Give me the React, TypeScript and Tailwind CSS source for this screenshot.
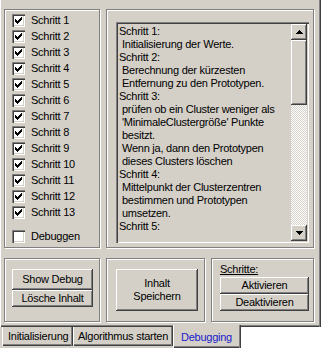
import React from 'react';

const steps = Array.from({ length: 13 }, (_, i) => `Schritt ${i + 1}`);

const log: { text: string; indent?: boolean }[] = [
  { text: 'Schritt 1:' },
  { text: 'Initialisierung der Werte.', indent: true },
  { text: 'Schritt 2:' },
  { text: 'Berechnung der kürzesten', indent: true },
  { text: 'Entfernung zu den Prototypen.', indent: true },
  { text: 'Schritt 3:' },
  { text: 'prüfen ob ein Cluster weniger als', indent: true },
  { text: "'MinimaleClustergröße' Punkte", indent: true },
  { text: 'besitzt.', indent: true },
  { text: 'Wenn ja, dann den Prototypen', indent: true },
  { text: 'dieses Clusters löschen', indent: true },
  { text: 'Schritt 4:' },
  { text: 'Mittelpunkt der Clusterzentren', indent: true },
  { text: 'bestimmen und Prototypen', indent: true },
  { text: 'umsetzen.', indent: true },
  { text: 'Schritt 5:' },
];

const raised =
  'shadow-[inset_-1px_-1px_0_#404040,inset_1px_1px_0_#fff,inset_-2px_-2px_0_#808080]';
const etched = 'border border-[#808080] shadow-[inset_1px_1px_0_#fff,1px_1px_0_#fff]';
const tabEdge =
  'shadow-[inset_1px_0_0_#fff,inset_-1px_0_0_#404040,inset_-2px_0_0_#808080,inset_0_-1px_0_#404040,inset_0_-2px_0_#808080]';

function CheckBox({ checked }: { checked: boolean }) {
  return (
    <div className="w-[13px] h-[13px] bg-white shrink-0 shadow-[inset_1px_1px_0_#808080,inset_2px_2px_0_#404040,inset_-1px_-1px_0_#fff,inset_-2px_-2px_0_#d4d0c8]">
      {checked && (
        <svg width="13" height="13" viewBox="0 0 13 13" shapeRendering="crispEdges">
          <rect x="3" y="5" width="1" height="3" fill="#000" />
          <rect x="4" y="6" width="1" height="3" fill="#000" />
          <rect x="5" y="7" width="1" height="3" fill="#000" />
          <rect x="6" y="6" width="1" height="3" fill="#000" />
          <rect x="7" y="5" width="1" height="3" fill="#000" />
          <rect x="8" y="4" width="1" height="3" fill="#000" />
          <rect x="9" y="3" width="1" height="3" fill="#000" />
        </svg>
      )}
    </div>
  );
}

function Arrow({ up }: { up?: boolean }) {
  return (
    <svg width="7" height="4" viewBox="0 0 7 4" shapeRendering="crispEdges">
      {up ? (
        <>
          <rect x="3" y="0" width="1" height="1" fill="#000" />
          <rect x="2" y="1" width="3" height="1" fill="#000" />
          <rect x="1" y="2" width="5" height="1" fill="#000" />
          <rect x="0" y="3" width="7" height="1" fill="#000" />
        </>
      ) : (
        <>
          <rect x="0" y="0" width="7" height="1" fill="#000" />
          <rect x="1" y="1" width="5" height="1" fill="#000" />
          <rect x="2" y="2" width="3" height="1" fill="#000" />
          <rect x="3" y="3" width="1" height="1" fill="#000" />
        </>
      )}
    </svg>
  );
}

export default function App() {
  return (
    <div className="w-[321px] h-[348px] bg-[#d4d0c8] text-black text-[11px] leading-[13px] tracking-[-0.25px] font-['Liberation_Sans',Arial,sans-serif] flex flex-col overflow-hidden">
      {/* tab page */}
      <div className="h-[327px] shrink-0 pl-[4px] pr-[7px] pt-[9px] shadow-[inset_1px_0_0_#fff,inset_-1px_0_0_#404040,inset_-2px_0_0_#808080,inset_0_-1px_0_#404040,inset_0_-2px_0_#808080] flex flex-col">
        <div className="flex gap-[6px] h-[239px]">
          <div className={`w-[96px] ${etched} pl-[7px] pt-[2px]`}>
            {steps.map(s => (
              <div key={s} className="h-[16px] flex items-center gap-[6px]">
                <CheckBox checked />
                <span>{s}</span>
              </div>
            ))}
            <div className="h-[16px] mt-[8px] flex items-center gap-[6px]">
              <CheckBox checked={false} />
              <span>Debuggen</span>
            </div>
          </div>

          <div className={`flex-1 ${etched} pl-[9px] pr-[4px] pt-[12px] pb-[4px] flex`}>
            <div className="flex-1 flex shadow-[inset_1px_1px_0_#808080,inset_2px_2px_0_#404040,inset_-1px_-1px_0_#fff,inset_-2px_-2px_0_#d4d0c8] p-[2px]">
              <div className="flex-1 pl-[1px] pt-[1px] overflow-hidden whitespace-nowrap">
                {log.map((l, i) => (
                  <div key={i} className={l.indent ? 'pl-[3px]' : ''}>{l.text}</div>
                ))}
              </div>
              <div className="w-[16px] flex flex-col">
                <div className={`h-[16px] flex items-center justify-center ${raised}`}>
                  <Arrow up />
                </div>
                <div className={`h-[65px] ${raised}`} />
                <div className="flex-1 bg-[repeating-conic-gradient(#fff_0_25%,#d4d0c8_0_50%)] bg-size-[2px_2px]" />
                <div className={`h-[16px] flex items-center justify-center ${raised}`}>
                  <Arrow />
                </div>
              </div>
            </div>
          </div>
        </div>

        <div className="flex gap-[6px] h-[64px] mt-[10px]">
          <div className={`w-[96px] ${etched} px-[7px] pt-[10px]`}>
            <button className={`w-[81px] h-[21px] block text-center ${raised}`}>Show Debug</button>
            <button className={`w-[81px] h-[17px] block text-center ${raised}`}>Lösche Inhalt</button>
          </div>
          <div className={`w-[99px] ${etched} pl-[9px] pt-[10px]`}>
            <button className={`w-[82px] h-[42px] flex flex-col items-center justify-center ${raised}`}>
              <span>Inhalt</span>
              <span>Speichern</span>
            </button>
          </div>
          <div className={`flex-1 ${etched} pl-[8px] pt-[3px]`}>
            <div className="underline h-[15px] leading-[15px]">Schritte:</div>
            <button className={`w-[89px] h-[17px] block text-center ${raised}`}>Aktivieren</button>
            <button className={`w-[89px] h-[17px] block text-center ${raised}`}>Deaktivieren</button>
          </div>
        </div>
      </div>

      {/* tabs */}
      <div className="flex flex-1 items-start">
        <div className="w-[2px] h-full" />
        <div className={`w-[71px] h-[19px] flex items-center pl-[6px] whitespace-nowrap ${tabEdge}`}>
          Initialisierung
        </div>
        <div className={`w-[100px] h-[19px] flex items-center pl-[5px] whitespace-nowrap ${tabEdge}`}>
          Algorithmus starten
        </div>
        <div className={`relative z-10 -mt-[2px] w-[68px] h-[23px] bg-[#d4d0c8] flex items-center pl-[8px] pt-[2px] text-[#1a1ac8] ${tabEdge}`}>
          Debugging
        </div>
        <div className="flex-1 h-full bg-white" />
      </div>
    </div>
  );
}
